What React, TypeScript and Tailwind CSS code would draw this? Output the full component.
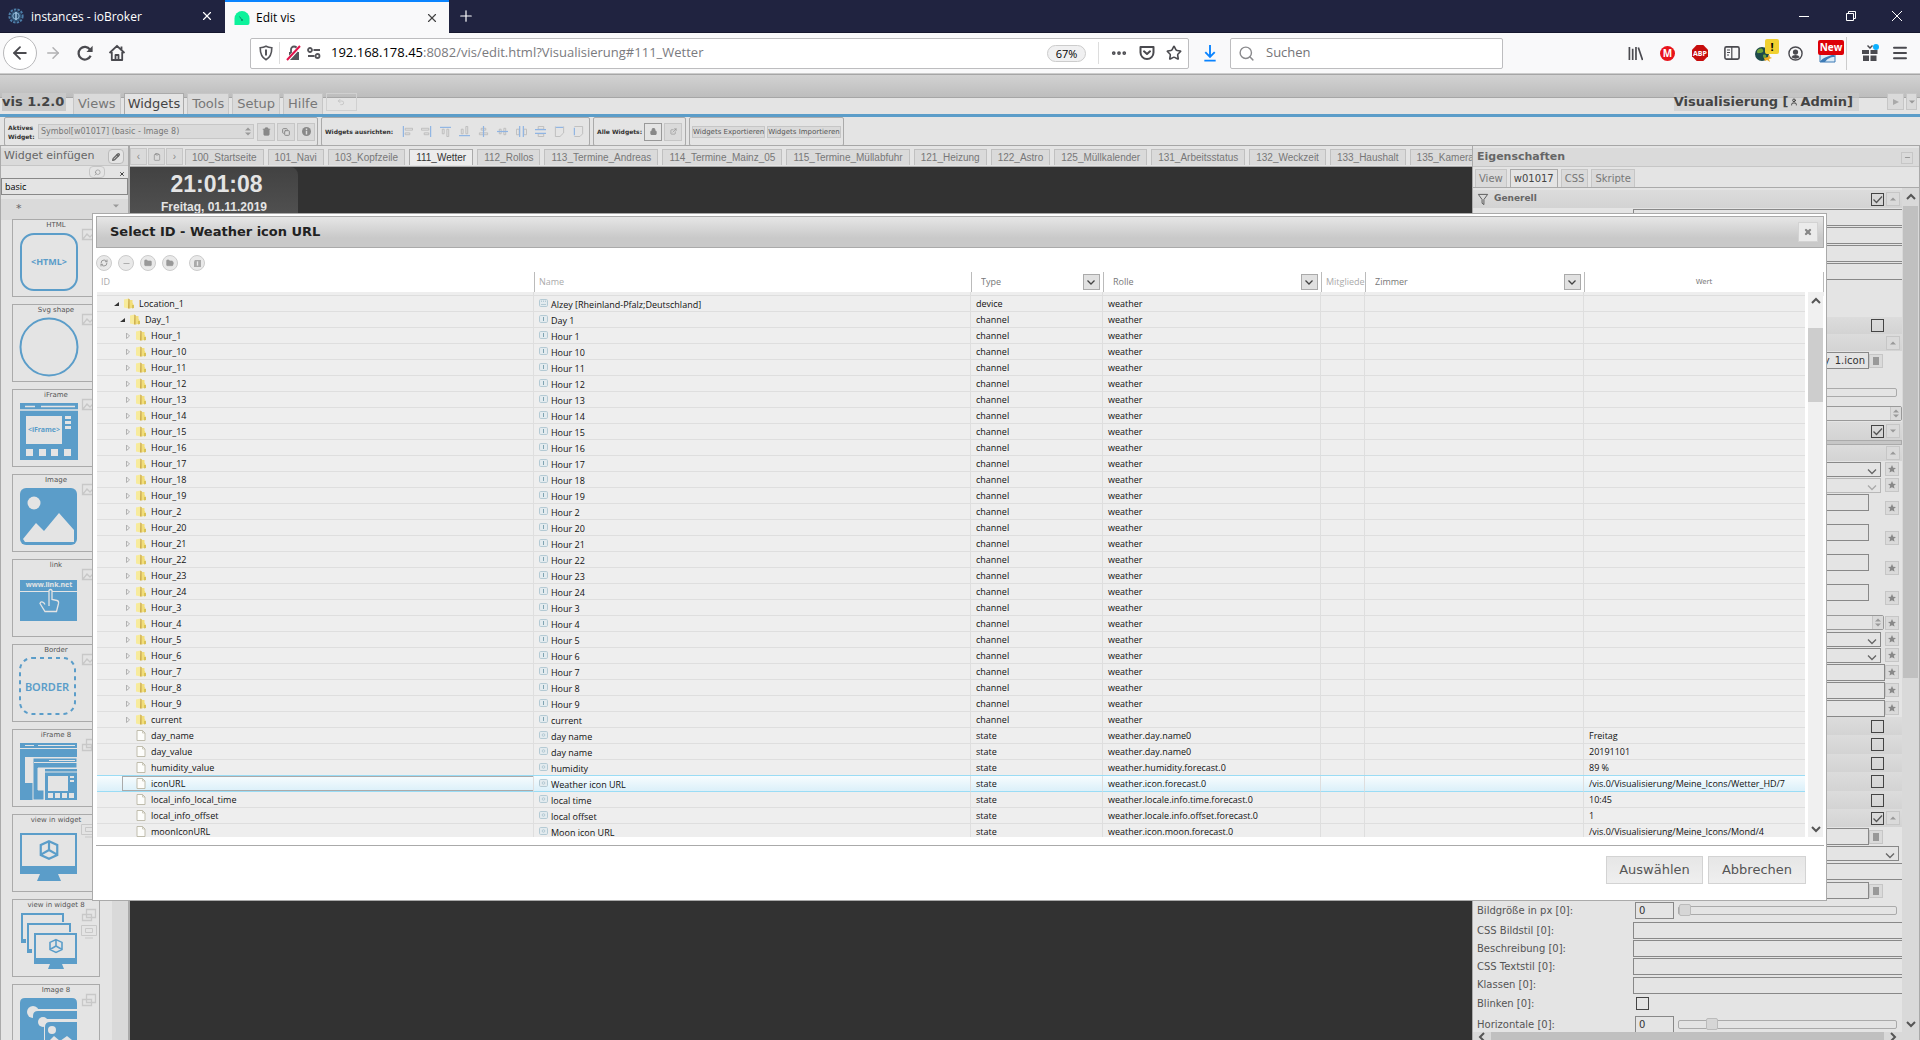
import { useState, type ReactNode } from "react";
import {
  ArrowLeft,
  ArrowRight,
  CircleUser,
  Clipboard,
  Copy,
  Ellipsis,
  ExternalLink,
  Folder,
  FolderOpen,
  Lock,
  Menu,
  Minus,
  Pencil,
  Plus,
  RefreshCw,
  Search,
  Star,
  Trash2,
  Undo2,
  User,
  X,
} from "lucide-react";

type TreeRow = {
  id: string;
  name: string;
  type: "device" | "channel" | "state";
  role: string;
  value?: string;
  level: number;
  open?: boolean;
};

const HOURS = [1, 10, 11, 12, 13, 14, 15, 16, 17, 18, 19, 2, 20, 21, 22, 23, 24, 3, 4, 5, 6, 7, 8, 9];

const ROWS: TreeRow[] = [
  { id: "Location_1", name: "Alzey [Rheinland-Pfalz;Deutschland]", type: "device", role: "weather", level: 0, open: true },
  { id: "Day_1", name: "Day 1", type: "channel", role: "weather", level: 1, open: true },
  ...HOURS.map((h) => ({
    id: `Hour_${h}`,
    name: `Hour ${h}`,
    type: "channel" as const,
    role: "weather",
    level: 2,
  })),
  { id: "current", name: "current", type: "channel", role: "weather", level: 2 },
  { id: "day_name", name: "day name", type: "state", role: "weather.day.name0", value: "Freitag", level: 2 },
  { id: "day_value", name: "day name", type: "state", role: "weather.day.name0", value: "20191101", level: 2 },
  { id: "humidity_value", name: "humidity", type: "state", role: "weather.humidity.forecast.0", value: "89 %", level: 2 },
  { id: "iconURL", name: "Weather icon URL", type: "state", role: "weather.icon.forecast.0", value: "/vis.0/Visualisierung/Meine_Icons/Wetter_HD/7", level: 2 },
  { id: "local_info_local_time", name: "local time", type: "state", role: "weather.locale.info.time.forecast.0", value: "10:45", level: 2 },
  { id: "local_info_offset", name: "local offset", type: "state", role: "weather.locale.info.offset.forecast.0", value: "1", level: 2 },
  { id: "moonIconURL", name: "Moon icon URL", type: "state", role: "weather.icon.moon.forecast.0", value: "/vis.0/Visualisierung/Meine_Icons/Mond/4", level: 2 },
];

const VIEWS = [
  "100_Startseite",
  "101_Navi",
  "103_Kopfzeile",
  "111_Wetter",
  "112_Rollos",
  "113_Termine_Andreas",
  "114_Termine_Mainz_05",
  "115_Termine_Müllabfuhr",
  "121_Heizung",
  "122_Astro",
  "125_Müllkalender",
  "131_Arbeitsstatus",
  "132_Weckzeit",
  "133_Haushalt",
  "135_Kameras",
];

/* ---------- browser chrome ---------- */

function GearLogo() {
  return (
    <svg viewBox="0 0 16 16" className="size-4">
      <circle cx="8" cy="8" r="6.6" fill="none" stroke="#4d7ea8" strokeWidth="2" strokeDasharray="2.4 1.2" />
      <circle cx="8" cy="8" r="5.2" fill="#2f5577" />
      <circle cx="8" cy="8" r="3.2" fill="none" stroke="#8db4d4" strokeWidth="1" />
      <path d="M8 4v8" stroke="#a9cbe6" strokeWidth="1.4" />
    </svg>
  );
}

function TabBar() {
  return (
    <div className="flex h-[33px] shrink-0 border-b border-[#15172e] bg-[#202340] text-[12px] text-white">
      <div className="flex w-[225px] items-center pl-2">
        <GearLogo />
        <span className="mt-[2px] ml-[7px] flex-1">instances - ioBroker</span>
        <button aria-label="Tab schließen" className="mr-[11px]">
          <X className="size-[14px]" strokeWidth={2} />
        </button>
      </div>
      <div className="flex h-[33px] w-[224px] items-center border-t-2 border-[#0a84ff] bg-[#f9f9fa] pl-[9px] text-black">
        <svg viewBox="0 0 16 16" className="size-4">
          <path d="M.5 15V8.500a7.500 7.500 0 0 1 15 0V13q0 2-2 2z" fill="#0df29b" />
          <path d="M8 10L5.500 6.500" stroke="#0b8f6c" />
          <circle cx="8" cy="10" r="1" fill="#0b8f6c" />
        </svg>
        <span className="ml-[6px] flex-1">Edit vis</span>
        <button aria-label="Tab schließen" className="mr-[10px]">
          <X className="size-[14px] text-[#444]" strokeWidth={2} />
        </button>
      </div>
      <button aria-label="Neuer Tab" className="ml-[8px] self-center">
        <Plus className="size-[18px]" strokeWidth={1.6} />
      </button>
      <div className="ml-auto flex items-center gap-[31px] pr-[17px]">
        <button aria-label="Minimieren">
          <svg viewBox="0 0 12 12" className="size-3">
            <path d="M1 6.500h10" stroke="#fff" />
          </svg>
        </button>
        <button aria-label="Wiederherstellen" className="ml-[4px]">
          <svg viewBox="0 0 12 12" className="size-3" fill="none" stroke="#fff">
            <path d="M1.500 3.500h7v7h-7zM3.500 3.500v-2h7v7h-2" />
          </svg>
        </button>
        <button aria-label="Schließen" className="ml-[3px]">
          <svg viewBox="0 0 12 12" className="size-3" stroke="#fff">
            <path d="M1 1l10 10M11 1L1 11" />
          </svg>
        </button>
      </div>
    </div>
  );
}

function NavBar() {
  return (
    <div className="flex h-[41px] shrink-0 items-center border-b border-[#ccc] bg-[#f9f9fa] text-[#4a4a4f]">
      <button aria-label="Zurück" className="ml-[3px] flex size-[34px] items-center justify-center rounded-full border border-[#b8b8ba] bg-white">
        <ArrowLeft className="size-5" strokeWidth={2.2} />
      </button>
      <button aria-label="Vor" className="ml-[7px] text-[#b1b1b3]">
        <ArrowRight className="size-[18px]" />
      </button>
      <button aria-label="Neu laden" className="ml-[14px]">
        <svg viewBox="0 0 16 16" className="size-[18px]" fill="none" stroke="currentColor" strokeWidth="2">
          <path d="M13 10.500A5.600 5.600 0 1 1 12.500 5" />
          <path d="M14.800 1.500v5.500H9.300z" fill="currentColor" stroke="none" />
        </svg>
      </button>
      <button aria-label="Startseite" className="ml-[14px]">
        <svg viewBox="0 0 18 18" className="size-[18px]" fill="none" stroke="currentColor" strokeWidth="1.800" strokeLinejoin="round">
          <path d="M1.500 9L9 1.800 16.500 9M3.800 8v8h10.400V8M7.500 16v-5h3v5M13.500 2.500v3" />
        </svg>
      </button>
      <div className="ml-[124px] flex h-[31px] w-[939px] items-center rounded-xs border border-[#bdbdbf] bg-white">
        <svg viewBox="0 0 14 16" className="ml-[8px] h-4 w-[14px]" fill="none" stroke="#55555a" strokeWidth="1.600">
          <path d="M7 1.200C5 2.200 3 2.600 1.200 2.700c0 5.300.8 9.300 5.800 12 5-2.700 5.800-6.700 5.800-12C11 2.600 9 2.200 7 1.200z" />
          <path d="M7 4.500v6" strokeWidth="2" />
        </svg>
        <span className="ml-[6px] h-[22px] w-px bg-[#ddd]" />
        <svg viewBox="0 0 16 18" className="ml-[6px] h-[18px] w-4">
          <path d="M3 8h10v8H3z" fill="#55555a" />
          <path d="M5 8V5.500a3 3 0 0 1 6 0V8" fill="none" stroke="#55555a" strokeWidth="1.800" />
          <path d="M1.500 16L14.500 2" stroke="#fff" strokeWidth="3.500" />
          <path d="M1 16L14 2" stroke="#e2124a" strokeWidth="2" />
        </svg>
        <svg viewBox="0 0 16 14" className="ml-[4px] h-[14px] w-4" fill="none" stroke="#55555a" strokeWidth="1.800">
          <circle cx="4" cy="4" r="2" />
          <path d="M7.500 4H14M2 10h6.500" />
          <circle cx="11.500" cy="10" r="2" />
        </svg>
        <span
          role="textbox"
          aria-label="Adresse"
          contentEditable
          suppressContentEditableWarning
          className="ml-[9px] flex-1 text-[13px] whitespace-nowrap text-[#7a7a7e]"
        >
          <span className="text-black">192.168.178.45</span>:8082/vis/edit.html?Visualisierung#111_Wetter
        </span>
        <button className="h-[17px] w-[39px] rounded-full border border-[#ccc] bg-[#f0f0f1] text-[11px] leading-[15px] text-black">67%</button>
        <span className="ml-[12px] h-[22px] w-px bg-[#ddd]" />
        <button aria-label="Seitenaktionen" className="ml-[11px]">
          <Ellipsis className="size-[18px]" strokeWidth={3} />
        </button>
        <button aria-label="Pocket" className="ml-[11px]">
          <svg viewBox="0 0 16 16" className="size-4" fill="none" stroke="currentColor" strokeWidth="2" strokeLinecap="round" strokeLinejoin="round">
            <path d="M1.500 2h13v5.500a6.500 6.500 0 0 1-13 0zM5 6.300L8 9l3-2.700" />
          </svg>
        </button>
        <button aria-label="Lesezeichen" className="mr-[6px] ml-[11px]">
          <Star className="size-4" strokeWidth={2.4} />
        </button>
      </div>
      <button aria-label="Downloads" className="ml-[13px] text-[#0a84ff]">
        <svg viewBox="0 0 16 18" className="h-[17px] w-4" fill="none" stroke="currentColor" strokeWidth="2">
          <path d="M8 0v12M3 7.500l5 5 5-5M2 16.500h12" />
        </svg>
      </button>
      <label className="ml-[12px] flex h-[31px] w-[273px] items-center rounded-xs border border-[#bdbdbf] bg-white pl-[7px]">
        <Search className="size-[17px] text-[#8a8a8d]" />
        <input type="search" placeholder="Suchen" aria-label="Suchen" className="ml-[11px] w-[200px] text-[13px] placeholder:text-[#747477]" />
      </label>
      <div className="ml-auto flex items-center">
        <svg viewBox="0 0 16 16" className="mr-[17px] size-[15px]" stroke="currentColor" strokeWidth="1.800">
          <path d="M1.500 1v14M5 3v12M8.500 1v14M11 1.500L15.500 15" />
        </svg>
        <span className="mr-[17px] flex size-[15px] items-center justify-center rounded-full bg-[#e8141c] text-[10px] leading-none font-bold text-white">M</span>
        <span className="relative mr-[16px] size-4">
          <svg viewBox="0 0 16 16" className="size-4">
            <path d="M4.700 0h6.600L16 4.700v6.600L11.300 16H4.700L0 11.300V4.700z" fill="#c70d0d" />
          </svg>
          <span className="absolute inset-0 flex items-center justify-center text-[7px] leading-none font-bold text-white">ABP</span>
        </span>
        <svg viewBox="0 0 16 14" className="mr-[15px] h-[14px] w-4" fill="none" stroke="currentColor" strokeWidth="1.600">
          <rect x=".9" y=".9" width="14.200" height="12.200" rx="1.500" />
          <path d="M7.800 1v12M3 4h3M3 6.500h3M3 9h2" strokeWidth="1.200" />
        </svg>
        <span className="relative mr-[9px] h-[20px] w-[24px]">
          <svg viewBox="0 0 24 20" className="h-[20px] w-[24px]">
            <circle cx="7" cy="11" r="7" fill="#1d4a4a" />
            <path d="M2 8c2-3 5-3 6-1s-1 3-3 3-3 1-3-2zM8 12c2-1 4 0 3 2s-3 2-3-2z" fill="#6fa23a" />
            <path d="M9 15l4-1 1-3 1 3 2 1-3 1 1 3-3-2-2 1z" fill="#f0ac20" />
          </svg>
          <span className="absolute -top-[4px] right-0 h-[15px] w-[14px] rounded-xs bg-[#f1d130] text-center text-[11px] leading-[15px] font-bold text-black">!</span>
        </span>
        <svg viewBox="0 0 16 16" className="mr-[15px] size-[15px]" fill="none" stroke="currentColor" strokeWidth="1.500">
          <circle cx="8" cy="8" r="7" />
          <circle cx="8" cy="6.500" r="2.800" fill="currentColor" stroke="none" />
          <path d="M3.500 12q1-2.500 4.500-2.500t4.500 2.500q-4.500 3-9 0z" fill="currentColor" stroke="none" />
        </svg>
        <span className="relative h-[26px] w-[27px]">
          <svg viewBox="0 0 27 26" className="h-[26px] w-[27px]">
            <path d="M2 14h15v8H2z" fill="#dcebf7" stroke="#3c7ab5" />
            <path d="M2 22c3-5 8-5 14-8l1 3c-5 0-8 2-10 5z" fill="#3c7ab5" />
          </svg>
          <span className="absolute top-0 left-0 h-[15px] w-[26px] rounded-xs bg-[#dd0007] text-center text-[10px] leading-[15px] font-bold text-white">New</span>
        </span>
        <span className="ml-[1px] h-[33px] w-px bg-[#ccc]" />
        <svg viewBox="0 0 18 18" className="ml-[14px] size-[18px]">
          <path d="M1 6h7v4H1zM9.500 6h7v4h-7zM2 11.500h6V17H2zM9.500 11.500h6V17h-6zM6 2l3 3 3-3-1-1-2 2-2-2z" fill="currentColor" />
          <circle cx="15" cy="3" r="3" fill="#0ab0ff" />
        </svg>
        <Menu className="mr-[11px] ml-[12px] size-[18px]" strokeWidth={2.6} />
      </div>
    </div>
  );
}

/* ---------- vis editor header ---------- */

const grey = "border border-[#c6c6c6] bg-[#dadada]";

function VisHeader() {
  return (
    <header className="flex h-[40px] shrink-0 items-start bg-[linear-gradient(#a6a6a6_1px,#d2d2d2_1px,#bdbdbd_23px,#a6a6a6_23px,#a6a6a6_24px,#e4e4e4_24px)] pt-[19px] font-['DejaVu_Sans']">
      <h1 className="mr-[7px] ml-[2px] w-[64px] bg-[#c9c9c9] text-[13px] leading-[18px] font-bold whitespace-nowrap text-[#444]">vis 1.2.0</h1>
      <nav className="flex gap-[3px] text-[13px] leading-[20px] text-[#777]">
        {["Views", "Widgets", "Tools", "Setup", "Hilfe"].map((m) => (
          <button
            key={m}
            className={
              m === "Widgets"
                ? "border border-b-0 border-[#aaa] bg-[#e4e4e4] px-[3px] text-[#444]"
                : "border border-b-0 border-[#c6c6c6] bg-[#dadada] px-[4px]"
            }
          >
            {m}
          </button>
        ))}
        <button aria-label="Rückgängig" className="flex h-[18px] w-[31px] items-center justify-center border border-[#d0d0d0] text-[#bbb]">
          <Undo2 className="size-[8px]" />
        </button>
      </nav>
      <p className="ml-auto flex items-center bg-[#c9c9c9]/60 pr-[6px] text-[13px] leading-[18px] font-bold text-[#444]">
        Visualisierung [<User className="mx-[2px] size-[8px]" strokeWidth={3} /> Admin]
      </p>
      <button aria-label="Abspielen" className={`mr-[2px] ml-[28px] flex h-[17px] w-[17px] items-center justify-center ${grey}`}>
        <svg viewBox="0 0 6 6" className="size-[6px]" fill="#aaa">
          <path d="M0 0l6 3-6 3z" />
        </svg>
      </button>
      <button aria-label="Mehr" className={`mr-[3px] flex h-[17px] w-[11px] items-center justify-center ${grey}`}>
        <Tri down />
      </button>
    </header>
  );
}

function Tri({ down = false }: { down?: boolean }) {
  return (
    <svg viewBox="0 0 6 4" className="h-[4px] w-[6px]" fill="#999">
      <path d={down ? "M0 .5h6l-3 3z" : "M0 3.500h6l-3-3z"} />
    </svg>
  );
}

// each glyph is one align action, blue marks the reference line
const ALIGN = [
  { label: "Links ausrichten", blue: "M1.500 0v12", rest: "M3.500 2.500h8v2h-8zM3.500 7.500h5v2h-5z" },
  { label: "Rechts ausrichten", blue: "M10.500 0v12", rest: "M.5 2.500h8v2h-8zM3.500 7.500h5v2h-5z" },
  { label: "Oben ausrichten", blue: "M0 1.500h12", rest: "M2.500 3.500v5h2v-5zM7.500 3.500v8h2v-8z" },
  { label: "Unten ausrichten", blue: "M0 10.500h12", rest: "M2.500 3.500v5h2v-5zM7.500 .5v8h2v-8z" },
  { label: "Vertikal zentrieren", blue: "M6 0v12", rest: "M3.500 2.500h5v2h-5zM1.500 7.500h9v2h-9z" },
  { label: "Horizontal zentrieren", blue: "M0 6h12", rest: "M2.500 3.500v5h2v-5zM7.500 2.500v7h2v-7z" },
  { label: "Breite verteilen", blue: "M4 0v12M8 0v12", rest: "M.5 3.500h3v6h-3zM8.500 3.500h3v6h-3z" },
  { label: "Höhe verteilen", blue: "M0 4h12M0 8h12", rest: "M3.500 .5h6v3h-6zM3.500 8.500h6v3h-6z" },
  { label: "Gleiche Breite", blue: "M2 1.500h8", rest: "M1.500 .5v11h5l4-4v-7" },
  { label: "Gleiche Höhe", blue: "M1.500 2v8", rest: "M1.500 .5h9v8l-3 3h-6" },
];

function Ribbon() {
  const group = "flex h-[29px] items-center rounded-xs border border-[#aaa]";
  const square = "flex size-[18px] items-center justify-center border text-[#888]";
  return (
    <div className="flex h-[32px] shrink-0 border-t-[3px] border-b border-[#5b9dc9] border-b-[#a6a6a6] bg-[#e4e4e4] pl-[4px] font-['DejaVu_Sans'] text-[7px] text-[#333]">
      <div className={`${group} w-[314px] gap-[2px] pl-[3px]`}>
        <label htmlFor="active-widget" className="w-[28px] text-[6px] leading-[9px] font-bold">
          Aktives Widget:
        </label>
        <div className="relative mr-[1px] w-[216px]">
          <select id="active-widget" className={`h-[15px] w-full appearance-none px-[2px] text-[8px] leading-[12px] text-[#777] ${grey}`}>
            <option>Symbol[w01017] (basic - Image 8)</option>
          </select>
          <span className="pointer-events-none absolute top-[3px] right-[3px] flex flex-col gap-px">
            <Tri />
            <Tri down />
          </span>
        </div>
        <button aria-label="Löschen" className={`${square} border-[#c6c6c6] bg-[#dadada]`}>
          <Trash2 className="size-[9px]" fill="currentColor" />
        </button>
        <button aria-label="Kopieren" className={`${square} border-[#c6c6c6] bg-[#dadada]`}>
          <Copy className="size-[8px]" strokeWidth={3} />
        </button>
        <button aria-label="Info" className={`${square} border-[#c6c6c6] bg-[#dadada]`}>
          <svg viewBox="0 0 10 10" className="size-[9px]">
            <circle cx="5" cy="5" r="5" fill="#888" />
            <path d="M5 1.800v1.500M5 4.200v4" stroke="#dadada" strokeWidth="1.600" />
          </svg>
        </button>
      </div>
      <div className={`${group} ml-[3px] w-[269px] justify-between pr-[5px] pl-[3px]`}>
        <b className="text-[6px] whitespace-nowrap">Widgets ausrichten:</b>
        <div className="flex gap-[8px]">
          {ALIGN.map((a) => (
            <button key={a.label} aria-label={a.label}>
              <svg viewBox="0 0 12 12" className="size-[11px]" fill="none">
                <path d={a.rest} stroke="#bbb" />
                <path d={a.blue} stroke="#8fb4e3" strokeWidth="1.300" />
              </svg>
            </button>
          ))}
        </div>
      </div>
      <div className={`${group} ml-[3px] w-[93px] justify-end gap-[2px] pr-[3px]`}>
        <b className="mr-auto ml-[3px] text-[6px] whitespace-nowrap">Alle Widgets:</b>
        <button aria-label="Sperren" className={`${square} border-[#999] text-[#444]`}>
          <Lock className="size-[7px]" strokeWidth={3.500} fill="currentColor" />
        </button>
        <button aria-label="Öffnen" className={`${square} border-[#c6c6c6] bg-[#dadada]`}>
          <ExternalLink className="size-[7px]" />
        </button>
      </div>
      <div className={`${group} ml-[3px] gap-[2px] px-[2px] text-[#555]`}>
        <button className={`h-[12px] leading-[10px] ${grey}`}>Widgets Exportieren</button>
        <button className={`h-[12px] leading-[10px] ${grey}`}>Widgets Importieren</button>
      </div>
    </div>
  );
}

/* ---------- widget palette ---------- */

const BLUE = "#5b9dc9";

function Cube({ x, y, s }: { x: number; y: number; s: number }) {
  return (
    <g transform={`translate(${x} ${y}) scale(${s})`} fill="none" stroke={BLUE} strokeWidth="2">
      <path d="M0-8l7.500 3.500v9L0 8l-7.500-3.500v-9zM0-7v7M0 0l7 4M0 0l-7 4" />
    </g>
  );
}

function WidgetArt({ kind }: { kind: string }) {
  const text = { fill: BLUE, textAnchor: "middle" as const, fontFamily: "Noto Sans", fontWeight: 700 };
  switch (kind) {
    case "HTML":
      return (
        <>
          <rect x="1" y="1" width="56" height="56" rx="13" fill="none" stroke={BLUE} strokeWidth="2" />
          <text x="29" y="32" fontSize="9" {...text}>&lt;HTML&gt;</text>
        </>
      );
    case "Svg shape":
      return <circle cx="29" cy="29" r="28.500" fill="none" stroke={BLUE} strokeWidth="2" />;
    case "iFrame":
      return (
        <>
          <path d="M0 0h58v57H0z" fill={BLUE} />
          <path d="M0 7h58M21 3.500h34M5 3.500h10" stroke="#e4e4e4" strokeWidth="1.300" />
          <path d="M6 13h36v28H6zM45 13h6v3h-6zM45 18h6v3h-6zM45 23h6v3h-6zM6 46h7v7H6zM19 46h7v7h-7zM31 46h7v7h-7zM44 46h7v7h-7z" fill="#e4e4e4" />
          <text x="24" y="29" fontSize="7" {...text}>&lt;iFrame&gt;</text>
        </>
      );
    case "Image":
      return (
        <>
          <rect width="57" height="57" rx="6" fill={BLUE} />
          <circle cx="14" cy="15" r="6.500" fill="#e4e4e4" />
          <path d="M3 51l13-16 8 8 15-18 15 17v12H5z" fill="#e4e4e4" />
        </>
      );
    case "link":
      return (
        <>
          <path d="M0 7h57v41H0z" fill={BLUE} />
          <path d="M0 18.500h57" stroke="#e4e4e4" />
          <text x="29" y="14" fontSize="7" {...text} fill="#e4e4e4">www.link.net</text>
          <path d="M29 33V17.500q1.500-2 3 0v9l5 1q2 .5 1.500 3l-2 8H25l-5-8q1-3 4-.5l1 1.500" fill={BLUE} stroke="#e4e4e4" strokeWidth="1.300" />
        </>
      );
    case "Border":
      return (
        <>
          <rect x="0" y="0" width="55" height="56" rx="12" fill="none" stroke={BLUE} strokeWidth="2" strokeDasharray="4 4" />
          <text x="27" y="33" fontSize="11" {...text} fontWeight={600}>BORDER</text>
        </>
      );
    case "iFrame 8":
      return (
        <>
          <path d="M0 0h57v14H5v26h8v17H0z" fill={BLUE} />
          <path d="M13 15h44v10H18v22h6v10H13z" fill={BLUE} stroke="#e4e4e4" />
          <path d="M25 26h32v31H25z" fill={BLUE} />
          <path d="M0 5.500h57M18 2.500h37M5 2.500h9M14 19.500h43M29 17.500h26M25 29h32" stroke="#e4e4e4" />
          <path d="M28 33h20v15H28zM50 33h4v2h-4zM50 37h4v2h-4zM28 50h5v5h-5zM35 50h5v5h-5zM42 50h5v5h-5zM49 50h5v5h-5z" fill="#e4e4e4" />
        </>
      );
    case "view in widget":
      return (
        <>
          <path d="M1 6h55v34H1z" fill="none" stroke={BLUE} strokeWidth="2" />
          <path d="M0 38h57v8H38l3 7H17l3-7H0z" fill={BLUE} />
          <Cube x={29} y={22} s={1.1} />
        </>
      );
    case "view in widget 8":
      return (
        <>
          <path d="M43 9V1H2v28h3M50 19v-8H8v28h3" fill="none" stroke={BLUE} strokeWidth="2" />
          <path d="M1 26h5v4H1zM7 36h5v4H7z" fill={BLUE} />
          <path d="M15 21h41v28H15z" fill="#e4e4e4" stroke={BLUE} strokeWidth="2" />
          <path d="M14 45h43v6H42l2 5H28l2-5H14z" fill={BLUE} />
          <Cube x={36} y={33} s={0.8} />
        </>
      );
    default:
      return (
        <>
          <path d="M5 0h47q5 0 5 5v6H13v46H0V5q0-5 5-5z" fill={BLUE} />
          <circle cx="13" cy="14" r="6" fill="#e4e4e4" />
          <path d="M18 13h39v8H24v36H13V18q0-5 5-5z" fill={BLUE} />
          <circle cx="23" cy="24" r="5" fill="#e4e4e4" />
          <path d="M30 24h27v33H25V29q0-5 5-5z" fill={BLUE} />
          <circle cx="32" cy="32" r="4" fill="#e4e4e4" />
          <path d="M26 46l8-8 6 5 7-5 10 8v11H26z" fill="#e4e4e4" />
        </>
      );
  }
}

const WIDGETS = [
  { name: "HTML", badge: "img" },
  { name: "Svg shape", badge: "img" },
  { name: "iFrame", badge: "img" },
  { name: "Image", badge: "img" },
  { name: "link", badge: "img" },
  { name: "Border", badge: "img" },
  { name: "iFrame 8", badge: "stack" },
  { name: "view in widget", badge: "screen" },
  { name: "view in widget 8", badge: "both" },
  { name: "Image 8", badge: "stack" },
];

function Badge({ kind }: { kind: string }) {
  return (
    <svg viewBox="0 0 16 32" className="absolute top-[8px] right-[2px] h-[32px] w-4" fill="none" stroke="#c8c8c8">
      {kind === "img" && <path d="M1.500 1.500h13v10h-13zM2 11l4-5 3 3 2-2 4 4" strokeWidth="1.300" />}
      {(kind === "stack" || kind === "both") && <path d="M5.500 1.500h9v8h-9zM1.500 6.500h9v6h-9z" fill="#e4e4e4" strokeWidth="1.300" />}
      {kind === "screen" && <path d="M.5 1.500h15v10H.5zM4.500 4.500h7v4h-7zM4 14h8" />}
      {kind === "both" && <path d="M.5 17.500h15v10H.5zM4.500 20.500h7v4h-7zM4 30h8" />}
    </svg>
  );
}

function Palette() {
  return (
    <aside className="flex w-[130px] shrink-0 flex-col border-r-2 border-l border-[#aaa] bg-[#e4e4e4] pt-[2px] font-['DejaVu_Sans']">
      <div className="flex h-[18px] shrink-0 items-center justify-between border-b border-[#c6c6c6] bg-[#dadada] pr-[4px] pl-[3px] text-[11px] text-[#666]">
        <h2 className="whitespace-nowrap">Widget einfügen</h2>
        <button aria-label="Bearbeiten" className="flex h-[15px] w-[16px] items-center justify-center rounded-sm border border-[#bbb] bg-[#e4e4e4]">
          <Pencil className="size-[8px]" strokeWidth={4} />
        </button>
      </div>
      <div className="flex h-[12px] shrink-0 items-center justify-end pr-[3px] text-[#888]">
        <button aria-label="Filtern" className="mr-[14px] flex h-[12px] w-[16px] items-center justify-center rounded-sm border border-[#c6c6c6]">
          <Search className="size-[7px] -scale-x-100" />
        </button>
        <button aria-label="Leeren" className="mt-[4px] text-[#444]">
          <X className="size-[6px]" strokeWidth={4} />
        </button>
      </div>
      <input aria-label="Filter" defaultValue="basic" className="h-[17px] w-full shrink-0 border border-[#888] px-[3px] font-['Open_Sans'] text-[9px] text-black" />
      <div className="relative h-[22px] shrink-0 border-b border-[#c6c6c6]">
        <select aria-label="Kategorie" className="h-full w-full appearance-none bg-[#dadada] pl-[15px] text-[11px] text-[#666]">
          <option>*</option>
        </select>
        <span className="pointer-events-none absolute top-[9px] right-[9px] flex">
          <Tri down />
        </span>
      </div>
      <div className="flex min-h-0 flex-1 overflow-hidden">
        <ul className="flex flex-1 flex-col gap-[7px] pt-[2px] pl-[11px]">
          {WIDGETS.map((w) => (
            <li key={w.name} className="relative h-[78px] w-[88px] shrink-0 border border-[#aaa]">
              <p className="text-center text-[7px] leading-[10px] text-[#555]">{w.name}</p>
              <svg viewBox="-1 -1 60 60" className="mt-[2px] ml-[6px] size-[60px]">
                <WidgetArt kind={w.name} />
              </svg>
              <Badge kind={w.badge} />
            </li>
          ))}
        </ul>
        <div className="w-[16px] bg-[#d9d9d9]" />
      </div>
    </aside>
  );
}

/* ---------- view area ---------- */

function Workspace() {
  const [active, setActive] = useState("111_Wetter");
  return (
    <main className="flex min-w-0 flex-1 flex-col bg-[#323232]">
      <div className="flex h-[21px] shrink-0 items-end gap-[4px] overflow-hidden border-b border-[#aaa] bg-[#e4e4e4] pb-px font-['Liberation_Sans'] text-[10px]">
        <div className="-mr-[2px] flex gap-px text-[#888]">
          <button aria-label="Nach links" className={`h-[17px] w-[17px] leading-[14px] ${grey}`}>‹</button>
          <button aria-label="Ansichten" className={`flex h-[17px] w-[17px] items-center justify-center ${grey}`}>
            <Clipboard className="size-[8px]" />
          </button>
          <button aria-label="Nach rechts" className={`h-[17px] w-[17px] leading-[14px] ${grey}`}>›</button>
        </div>
        {VIEWS.map((v) => (
          <button
            key={v}
            onClick={() => setActive(v)}
            className={
              v === active
                ? "h-[16px] shrink-0 border border-b-0 border-[#aaa] bg-[#ececec] px-[6px] leading-[15px] text-[#333]"
                : "h-[16px] shrink-0 border border-b-0 border-[#c0c0c0] bg-[#dadada] px-[6px] leading-[15px] text-[#777]"
            }
          >
            {v}
          </button>
        ))}
      </div>
      <div className="h-[80px] w-[168px] rounded-tr-lg bg-gradient-to-b from-[#424242] to-[#5a5a5a] pt-[5px] text-center font-['Liberation_Sans'] font-bold text-[#e4e4e4]">
        <p className="pl-[5px] text-[23px] leading-[24px]">21:01:08</p>
        <p className="mt-[4px] text-[12px] leading-[14px]">Freitag, 01.11.2019</p>
      </div>
    </main>
  );
}

/* ---------- properties ---------- */

function Check({ label, on = false }: { label: string; on?: boolean }) {
  return (
    <span className="relative size-[13px] shrink-0">
      <input type="checkbox" aria-label={label} defaultChecked={on} className="peer block size-[13px] appearance-none border border-[#444]" />
      <svg viewBox="0 0 13 13" className="pointer-events-none absolute inset-0 hidden size-[13px] peer-checked:block" fill="none" stroke="#555" strokeWidth="1.300">
        <path d="M2.500 6.500l3 3 5.500-6" />
      </svg>
    </span>
  );
}

function Mini({ label, children }: { label: string; children: ReactNode }) {
  return (
    <button aria-label={label} className={`flex size-[14px] shrink-0 items-center justify-center ${grey}`}>
      {children}
    </button>
  );
}

function StarButton() {
  return (
    <Mini label="Binding">
      <svg viewBox="0 0 10 10" className="size-[8px]" fill="#888">
        <path d="M5 0l1.500 3.300 3.500.3-2.700 2.300.9 3.600L5 7.700 1.800 9.500l.9-3.600L0 3.600l3.500-.3z" />
      </svg>
    </Mini>
  );
}

function SectionBar({ title, check, toggle, h = "h-[18px]" }: { title?: string; check?: "on" | "off"; toggle?: "up" | "down"; h?: string }) {
  return (
    <div className={`flex ${h} shrink-0 items-center gap-[2px] bg-gradient-to-b from-[#dcdcdc] to-[#d3d3d3] pr-[2px] pl-[4px]`}>
      {title && (
        <h3 className="flex items-center gap-[5px] text-[9px] font-bold text-[#666]">
          <svg viewBox="0 0 12 14" className="h-[13px] w-[12px]" fill="none" stroke="#555">
            <path d="M1 1.500h10L7 7v5.500L5 11V7z" />
          </svg>
          {title}
        </h3>
      )}
      <span className="ml-auto" />
      {check && <Check label="Gruppe aktiv" on={check === "on"} />}
      {toggle ? (
        <Mini label="Auf- oder zuklappen">
          <Tri down={toggle === "down"} />
        </Mini>
      ) : (
        <span className="w-[14px]" />
      )}
    </div>
  );
}

const box = "h-[17px] border border-[#888] bg-[#e4e4e4] px-[3px] text-[10px] text-[#333]";

function Field({ label, value, extra, h = "h-[18px]" }: { label?: string; value?: string; extra?: "star" | "pick" | "starWide"; h?: string }) {
  return (
    <div className={`flex ${h} shrink-0 items-end pl-[4px]`}>
      <span className="w-[156px] shrink-0 self-center text-[10px] text-[#555]">{label}</span>
      <input
        aria-label={label ?? "Eigenschaft"}
        defaultValue={value}
        className={`${box} min-w-0 flex-1 ${extra ? "text-right" : "border-r-0"}`}
      />
      {extra === "pick" && (
        <span className="mr-[19px] mb-px">
          <Mini label="Auswählen">
            <span className="h-[8px] w-[6px] bg-[#999]" />
          </Mini>
        </span>
      )}
      {extra === "star" && (
        <span className="mr-[3px] -mb-[4px] ml-[16px]">
          <StarButton />
        </span>
      )}
      {extra === "starWide" && (
        <span className="mr-[3px] mb-[2px]">
          <StarButton />
        </span>
      )}
    </div>
  );
}

function SelectField({ star, muted }: { star?: boolean; muted?: boolean }) {
  return (
    <div className="flex h-[16px] shrink-0 items-center pr-[3px] pl-[160px]">
      <div className="relative flex-1">
        <select aria-label="Eigenschaft" disabled={muted} className={`block h-[15px] w-full appearance-none border ${muted ? "border-[#b8b8b8]" : "border-[#888]"}`} />
        <svg viewBox="0 0 10 6" className="pointer-events-none absolute top-[7px] right-[4px] h-[6px] w-[10px]" fill="none" stroke={muted ? "#aaa" : "#666"} strokeWidth="1.300">
          <path d="M1 .5l4 4 4-4" />
        </svg>
      </div>
      {star && (
        <span className="ml-[4px]">
          <StarButton />
        </span>
      )}
    </div>
  );
}

function SpinField({ star }: { star?: boolean }) {
  return (
    <div className="flex h-[17px] shrink-0 items-center pl-[160px]">
      <div className="flex h-[15px] flex-1 rounded-xs border border-[#999]">
        <input aria-label="Wert" className="min-w-0 flex-1" />
        <span className="flex w-[11px] flex-col items-center justify-evenly border-l border-[#c6c6c6] bg-[#dadada]">
          <button aria-label="Erhöhen" className="flex">
            <Tri />
          </button>
          <button aria-label="Verringern" className="flex">
            <Tri down />
          </button>
        </span>
      </div>
      {star && (
        <span className="mr-[3px] ml-[1px]">
          <StarButton />
        </span>
      )}
    </div>
  );
}

function Slider({ label, value }: { label: string; value: number }) {
  return (
    <input
      type="range"
      aria-label={label}
      defaultValue={value}
      className="mr-[5px] h-[9px] min-w-0 flex-1 appearance-none rounded-xs border border-[#aaa] [&::-webkit-slider-thumb]:h-[12px] [&::-webkit-slider-thumb]:w-[12px] [&::-webkit-slider-thumb]:appearance-none [&::-webkit-slider-thumb]:rounded-xs [&::-webkit-slider-thumb]:border [&::-webkit-slider-thumb]:border-[#bbb] [&::-webkit-slider-thumb]:bg-[#d6d6d6]"
    />
  );
}

function NumberRow({ label, value }: { label: string; value: number }) {
  return (
    <div className="flex h-[22px] shrink-0 items-center pl-[4px]">
      <span className="w-[158px] shrink-0 text-[10px] text-[#555]">{label}</span>
      <input aria-label={label} defaultValue="0" className={`${box} mr-[4px] w-[39px]`} />
      <Slider label={label} value={value} />
    </div>
  );
}

function Arrow({ d, className = "" }: { d: string; className?: string }) {
  return (
    <svg viewBox="0 0 10 10" className={`size-[10px] shrink-0 ${className}`} fill="none" stroke="#555" strokeWidth="2">
      <path d={d} />
    </svg>
  );
}

function Properties() {
  return (
    <aside className="flex w-[448px] shrink-0 flex-col border-x border-[#aaa] bg-[#e4e4e4] pt-[2px] font-['DejaVu_Sans']">
      <div className="flex h-[19px] shrink-0 items-center justify-between border-b border-[#c6c6c6] bg-[#dadada] pt-px pr-[6px] pl-[4px]">
        <h2 className="text-[11px] font-bold text-[#666]">Eigenschaften</h2>
        <button aria-label="Minimieren" className="flex size-[12px] items-center justify-center border border-[#c6c6c6] text-[#999]">
          <Minus className="size-[7px]" strokeWidth={4} />
        </button>
      </div>
      <div className="flex h-[21px] shrink-0 items-end gap-[3px] border-b border-[#aaa] pl-[2px] text-[10px] leading-[17px] text-[#777]">
        {["View", "w01017", "CSS", "Skripte"].map((t) => (
          <button
            key={t}
            className={
              t === "w01017"
                ? "h-[18px] border border-b-0 border-[#aaa] bg-[#e4e4e4] px-[3px] text-[#444]"
                : "h-[18px] border border-b-0 border-[#c6c6c6] bg-[#dadada] px-[3px]"
            }
          >
            {t}
          </button>
        ))}
      </div>
      <div className="flex min-h-0 flex-1">
        <div className="flex min-w-0 flex-1 flex-col overflow-hidden">
          <div className="flex min-h-0 flex-1 flex-col overflow-hidden pt-[2px]">
            <SectionBar title="Generell" check="on" toggle="up" />
            <Field />
            <Field />
            <Field />
            <Field />
            <div className="h-[37px] shrink-0" />
            <SectionBar check="off" h="h-[17px]" />
            <SectionBar toggle="up" h="h-[17px]" />
            <Field value="y_1.icon" extra="pick" />
            <div className="flex h-[36px] shrink-0 items-center pt-[10px] pl-[160px]">
              <Slider label="Deckkraft" value={0} />
            </div>
            <SpinField />
            <SectionBar check="on" toggle="down" />
            <div className="h-[5px] shrink-0 border border-[#aaa] bg-[#c6c6c6]" />
            <SectionBar toggle="up" h="h-[16px]" />
            <SelectField star />
            <SelectField star muted />
            <Field extra="star" />
            <div className="h-[12px] shrink-0" />
            <Field extra="star" />
            <div className="h-[12px] shrink-0" />
            <Field extra="star" />
            <div className="h-[12px] shrink-0" />
            <Field extra="star" />
            <div className="h-[13px] shrink-0" />
            <SpinField star />
            <SelectField star />
            <SelectField star />
            <Field extra="starWide" />
            <Field extra="starWide" />
            <Field extra="starWide" />
            <SectionBar check="off" />
            <SectionBar check="off" h="h-[19px]" />
            <SectionBar check="off" />
            <SectionBar check="off" h="h-[19px]" />
            <SectionBar check="off" />
            <SectionBar check="on" toggle="up" />
            <Field extra="pick" />
            <SelectField />
            <Field h="h-[19px]" />
            <Field extra="pick" h="h-[19px]" />
            <NumberRow label="Bildgröße in px [0]:" value={0} />
            <Field label="CSS Bildstil [0]:" />
            <Field label="Beschreibung [0]:" />
            <Field label="CSS Textstil [0]:" />
            <Field label="Klassen [0]:" h="h-[19px]" />
            <div className="flex h-[19px] shrink-0 items-center pl-[4px]">
              <span className="w-[159px] text-[10px] text-[#555]">Blinken [0]:</span>
              <Check label="Blinken [0]:" />
            </div>
            <NumberRow label="Horizontale [0]:" value={13} />
          </div>
          <div className="flex h-[8px] shrink-0 items-start overflow-hidden bg-[#d9d9d9]">
            <Arrow d="M7 1L3 5l4 4" className="ml-[4px]" />
            <div className="mx-[4px] h-full flex-1 bg-[#c0c0c0]" />
            <Arrow d="M3 1l4 4-4 4" className="mr-[4px]" />
          </div>
        </div>
        <div className="flex w-[17px] shrink-0 flex-col items-center bg-[#d9d9d9] pb-[11px]">
          <Arrow d="M1 7l4-4 4 4" className="my-[4px]" />
          <div className="h-[472px] w-[15px] bg-[#c0c0c0]" />
          <Arrow d="M1 3l4 4 4-4" className="mt-auto" />
        </div>
      </div>
    </aside>
  );
}

/* ---------- select id dialog ---------- */

function FolderGlyph() {
  return (
    <svg viewBox="0 0 10 11" className="h-[11px] w-[10px] shrink-0">
      <path d="M0 1.500L4.500 .5v10L0 9.500z" fill="#f7eb9c" />
      <path d="M4.300 .5l1.500 1v9H4z" fill="#cfae45" />
      <path d="M5.800 2H8.500v2.500q1.500 2 1.300 5l-4 1z" fill="#f2de7a" />
      <path d="M8 7h2v3l-2 .5z" fill="#d9c25a" />
    </svg>
  );
}

function PageGlyph() {
  return (
    <svg viewBox="0 0 10 11" className="h-[11px] w-[10px] shrink-0">
      <path d="M1 .5h5.500L9 3v7.500H1z" fill="#fdfdfb" stroke="#b9b6a4" strokeWidth=".9" />
      <path d="M6.500 .5V3H9" fill="none" stroke="#b9b6a4" strokeWidth=".7" />
    </svg>
  );
}

function TypeGlyph({ type }: { type: TreeRow["type"] }) {
  return (
    <svg viewBox="0 0 9 8" className="h-[8px] w-[9px] shrink-0" fill="none" stroke="#b4cad4">
      <rect x=".5" y=".5" width="8" height="7" rx="1.200" fill="#e3ebef" />
      {type === "device" && <path d="M2.500 1.500v1.500M4.500 1.500v1.500M6.500 1.500v1.500M2 5.500h5" />}
      {type === "channel" && <path d="M4.500 2v4" stroke="#7fa3b1" />}
      {type === "state" && <circle cx="4.500" cy="4" r="1.300" />}
    </svg>
  );
}

function HeadSelect({ label }: { label: string }) {
  return (
    <div className="relative mr-[3px] ml-[9px] h-[16px]">
      <select aria-label={label} className="h-full w-full appearance-none bg-white text-[9px] text-[#777]">
        <option>{label}</option>
      </select>
      <span className="pointer-events-none absolute top-0 right-0 flex h-[16px] w-[17px] items-center justify-center border border-[#aaa] bg-[#e1e1e1]">
        <svg viewBox="0 0 8 5" className="h-[5px] w-[8px]" fill="none" stroke="#444" strokeWidth="1.300">
          <path d="M.5 .5L4 4 7.500 .5" />
        </svg>
      </span>
    </div>
  );
}

const INDENT = ["pl-[17px]", "pl-[23px]", "pl-[29px]"];

function SelectIdDialog() {
  const [selected, setSelected] = useState("iconURL");
  const th = "h-[20px] border-l border-[#bbb] p-0 font-normal";
  const tools = [
    { label: "Aktualisieren", icon: <RefreshCw className="size-[8px]" strokeWidth={3} /> },
    { label: "Liste", icon: <Minus className="size-[9px]" /> },
    { label: "Zuklappen", icon: <Folder className="size-[8px]" fill="currentColor" /> },
    { label: "Aufklappen", icon: <FolderOpen className="size-[8px]" fill="currentColor" /> },
    {
      label: "Spalten",
      icon: (
        <svg viewBox="0 0 8 8" className="size-[7px]">
          <path d="M1 0h7v8H0V2z" fill="#aaa" />
          <path d="M4 1.500v5" stroke="#e9e9e9" strokeWidth="1.500" />
        </svg>
      ),
    },
  ];
  return (
    <section
      role="dialog"
      aria-label="Select ID"
      className="absolute top-[213px] right-[93px] bottom-[139px] left-[92px] flex flex-col border border-[#aaa] bg-white p-[2px] pl-[3px]"
    >
      <div className="flex h-[32px] shrink-0 items-center justify-between border border-[#aaa] bg-gradient-to-b from-[#e6e6e6] to-[#c9c9c9] to-70% pr-[5px] pl-[13px] font-['DejaVu_Sans']">
        <h2 className="text-[13px] font-bold text-[#222]">Select ID - Weather icon URL</h2>
        <button aria-label="Schließen" className="flex size-[20px] items-center justify-center border border-[#d3d3d3] bg-[#ebebeb] text-[#888]">
          <X className="size-[8px]" strokeWidth={7} />
        </button>
      </div>
      <div className="flex h-[24px] shrink-0 items-end gap-[6px] pb-px">
        {tools.map((t) => (
          <button key={t.label} aria-label={t.label} className="flex size-[16px] items-center justify-center rounded-full border border-[#ccc] bg-[#e9e9e9] text-[#999] last:ml-[5px]">
            {t.icon}
          </button>
        ))}
      </div>
      <div className="relative min-h-0 flex-1 overflow-hidden pl-px font-['Open_Sans'] text-[9px] text-[#111]">
        <table className="w-full table-fixed border-separate border-spacing-0 text-left leading-[14px]">
          <colgroup>
            <col />
            <col />
            <col className="w-[132px]" />
            <col className="w-[218px]" />
            <col className="w-[44px]" />
            <col className="w-[219px]" />
            <col className="w-[222px]" />
            <col className="w-[18px]" />
          </colgroup>
          <thead>
            <tr className="text-[#aaa]">
              <th className="h-[20px] p-0 pl-[4px] font-normal">ID</th>
              <th className={th}>
                <span className="pl-[4px]">Name</span>
              </th>
              <th className={th}>
                <HeadSelect label="Type" />
              </th>
              <th className={th}>
                <HeadSelect label="Rolle" />
              </th>
              <th className={`${th} overflow-hidden whitespace-nowrap`}>
                <span className="pl-[4px]">Mitgliede</span>
              </th>
              <th className={th}>
                <HeadSelect label="Zimmer" />
              </th>
              <th colSpan={2} className={`${th} border-r text-center font-['DejaVu_Sans'] text-[7px] text-[#777]`}>
                Wert
              </th>
            </tr>
          </thead>
          <tbody>
            <tr className="bg-[#eee]">
              {[0, 1, 2, 3, 4, 5, 6].map((i) => (
                <td key={i} className="h-[4px] border-r border-b border-[#dedede] p-0" />
              ))}
              <td className="p-0" />
            </tr>
            {ROWS.map((r) => {
              const on = r.id === selected;
              const td = on
                ? "h-[16px] border-r border-b border-r-[#dedede] border-b-[#9adcf5] shadow-[0_-1px_0_#9adcf5] p-0"
                : "h-[16px] border-r border-b border-[#dedede] p-0";
              return (
                <tr key={r.id} onClick={() => setSelected(r.id)} className={on ? "bg-gradient-to-b from-[#f7fcfe] to-[#d9eff9]" : "bg-[#eee]"}>
                  <td className={td}>
                    <div className={on ? "ml-[25px] border border-r-0 border-[#aaa]" : "ml-[25px] border border-transparent"}>
                      <div className={`-ml-[26px] flex h-[13px] items-center ${INDENT[r.level] ?? ""}`}>
                        {r.type === "state" ? (
                          <span className="w-[10px]" />
                        ) : (
                          <svg viewBox="0 0 10 8" className="h-[8px] w-[10px] shrink-0">
                            {r.open ? <path d="M5 2v4H0z" fill="#333" /> : <path d="M.5 1v5.500L3.500 4z" fill="none" stroke="#aaa" strokeWidth=".9" />}
                          </svg>
                        )}
                        {r.type === "state" ? <PageGlyph /> : <FolderGlyph />}
                        <span className="ml-[5px]">{r.id}</span>
                      </div>
                    </div>
                  </td>
                  <td className={td}>
                    <div className="flex h-[15px] pl-[5px]">
                      <span className="mt-[3px] mr-[3px]">
                        <TypeGlyph type={r.type} />
                      </span>
                      <span className="pt-[2px] leading-[13px]">{r.name}</span>
                    </div>
                  </td>
                  <td className={td}>
                    <span className="pl-[5px]">{r.type}</span>
                  </td>
                  <td className={td}>
                    <span className="pl-[5px]">{r.role}</span>
                  </td>
                  <td className={td} />
                  <td className={td} />
                  <td className={`${td} whitespace-nowrap`}>
                    <span className="pl-[5px]">{r.value}</span>
                  </td>
                  <td className="bg-white p-0" />
                </tr>
              );
            })}
          </tbody>
        </table>
        <div className="absolute top-[20px] right-[1px] bottom-0 flex w-[18px] flex-col items-center border-l-[3px] border-white bg-[#f0f0f0]">
          <Arrow d="M1 7l4-4 4 4" className="mt-[4px] mb-[22px]" />
          <div className="h-[74px] w-[15px] bg-[#cdcdcd]" />
          <Arrow d="M1 3l4 4 4-4" className="mt-auto mb-[3px]" />
        </div>
      </div>
      <div className="mt-[8px] flex h-[53px] shrink-0 items-start justify-end gap-[5px] border-t border-[#aaa] pt-[10px] pr-[18px] font-['DejaVu_Sans'] text-[13px] text-[#555]">
        <button className="h-[28px] w-[97px] border border-[#d3d3d3] bg-gradient-to-b from-[#e6e6e6] to-[#efefef]">Auswählen</button>
        <button className="h-[28px] w-[98px] border border-[#d3d3d3] bg-gradient-to-b from-[#e6e6e6] to-[#efefef]">Abbrechen</button>
      </div>
    </section>
  );
}

export default function App() {
  return (
    <div className="relative flex h-screen flex-col overflow-hidden bg-[#e4e4e4] font-['Open_Sans',sans-serif]">
      <TabBar />
      <NavBar />
      <VisHeader />
      <Ribbon />
      <div className="flex min-h-0 flex-1">
        <Palette />
        <Workspace />
        <Properties />
      </div>
      <SelectIdDialog />
    </div>
  );
}
